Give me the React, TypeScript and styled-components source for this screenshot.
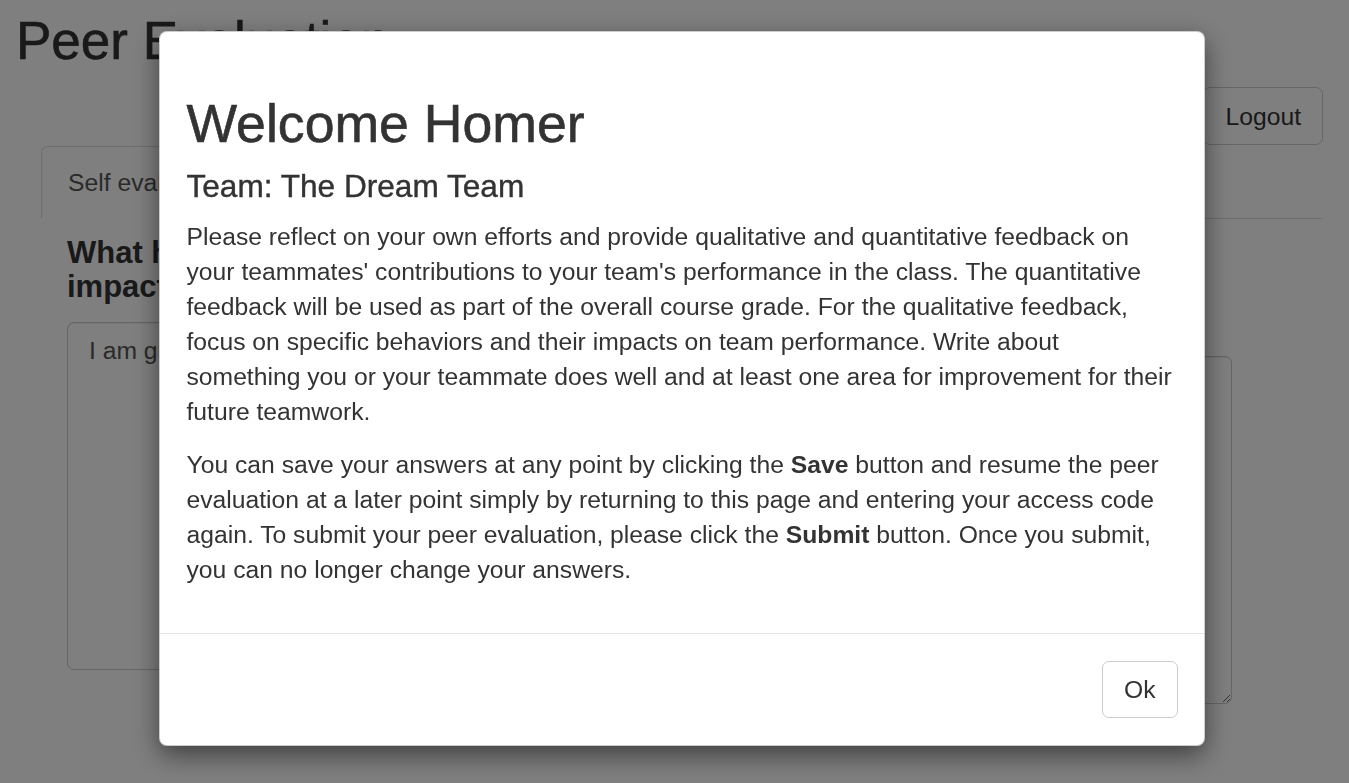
import React from 'react';
import styled, {createGlobalStyle} from 'styled-components';

const GlobalStyle = createGlobalStyle`
	* {
		box-sizing: border-box;
	}
	body {
		margin: 0;
		background: #ffffff;
		color: #333333;
		font-family: "Liberation Sans", Arial, sans-serif;
		font-size: 24.7px;
		line-height: 35px;
	}
`;

const Page = styled.div`
	padding: 12px 26px 0 16px;
`;

const Title = styled.h2`
	margin: 0;
	font-size: 53px;
	font-weight: 500;
	line-height: 1.1;
	-webkit-text-stroke: 0.6px #333333;
`;

const Toolbar = styled.div`
	display: flex;
	justify-content: flex-end;
	margin: 17px 0 1px;
`;

const Button = styled.button`
	padding: 10.3px 21px;
	border: 1px solid #cccccc;
	border-radius: 7px;
	background: #ffffff;
	color: #333333;
	font: inherit;
	line-height: 35px;
`;

const Content = styled.div`
	margin-left: 25px;
`;

const Tabs = styled.ul`
	display: flex;
	margin: 0;
	padding: 0;
	list-style: none;
	border-bottom: 1px solid #dddddd;
`;

const Tab = styled.li<{ active?: boolean }>`
	margin: 0 4px -1px 0;
	padding: 18px 26px;
	border: 1px solid ${p => (p.active ? '#dddddd' : 'transparent')};
	border-bottom-color: transparent;
	border-radius: 7px 7px 0 0;
	background: #ffffff;
	color: ${p => (p.active ? '#555555' : '#337ab7')};
`;

const Pane = styled.div`
	display: grid;
	grid-template-columns: 556px 556px;
	column-gap: 53px;
	padding: 0 26px;
`;

const Question = styled.h4`
	margin: 17.5px 0;
	font-size: 31px;
	font-weight: bold;
	line-height: 1.1;
`;

const Answer = styled.textarea`
	display: block;
	width: 100%;
	height: 348px;
	padding: 10px 21px;
	border: 1px solid #cccccc;
	border-radius: 7px;
	box-shadow: inset 0 1px 1px rgba(0, 0, 0, 0.075);
	color: #555555;
	font: inherit;
	line-height: 35px;
	resize: vertical;
`;

const Backdrop = styled.div`
	position: fixed;
	inset: 0;
	display: flex;
	align-items: flex-start;
	padding: 31px 0 0 159px;
	background: rgba(0, 0, 0, 0.5);
`;

const Dialog = styled.div`
	width: 1046px;
	border: 1px solid rgba(0, 0, 0, 0.2);
	border-radius: 8px;
	background: #ffffff;
	box-shadow: 0 9px 26px rgba(0, 0, 0, 0.5);
	overflow: hidden;
`;

const Body = styled.div`
	padding: 26.5px 26.5px 28.4px;
	> p {
		margin: 0 0 17.65px;
	}
`;

const Heading = styled.h2`
	margin: 35.4px 0 15.7px;
	font-size: 53.6px;
	font-weight: 500;
	line-height: 1.1;
	-webkit-text-stroke: 0.6px #333333;
`;

const Team = styled.h4`
	margin: 0 0 16.1px;
	font-size: 31.6px;
	font-weight: 500;
	line-height: 1.1;
	-webkit-text-stroke: 0.4px #333333;
`;

const Footer = styled.div`
	display: flex;
	justify-content: flex-end;
	padding: 26.5px;
	border-top: 1px solid #e5e5e5;
`;

const App = () => {
	return (
		<>
			<GlobalStyle/>
			<Page>
				<Title>Peer Evaluation</Title>
				<Toolbar>
					<Button>Logout</Button>
				</Toolbar>
				<Content>
					<Tabs>
						<Tab active>Self evaluation</Tab>
						<Tab>Bart Simpson</Tab>
						<Tab>Lisa Simpson</Tab>
					</Tabs>
					<Pane>
						<div>
							<Question>What have you contributed and what<br/>impact did it have on the team?</Question>
							<Answer defaultValue="I am glad with my work this term."/>
						</div>
						<div>
							<Question>How well did you<br/>communicate with your<br/>teammates?</Question>
							<Answer defaultValue=""/>
						</div>
					</Pane>
				</Content>
			</Page>
			<Backdrop>
				<Dialog>
					<Body>
						<Heading>Welcome Homer</Heading>
						<Team>Team: The Dream Team</Team>
						<p>
							Please reflect on your own efforts and provide qualitative and quantitative feedback on
							your teammates' contributions to your team's performance in the class. The quantitative
							feedback will be used as part of the overall course grade. For the qualitative feedback,
							focus on specific behaviors and their impacts on team performance. Write about
							something you or your teammate does well and at least one area for improvement for their
							future teamwork.
						</p>
						<p>
							You can save your answers at any point by clicking the <b>Save</b> button and resume the peer
							evaluation at a later point simply by returning to this page and entering your access code
							again. To submit your peer evaluation, please click the <b>Submit</b> button. Once you submit,
							you can no longer change your answers.
						</p>
					</Body>
					<Footer>
						<Button>Ok</Button>
					</Footer>
				</Dialog>
			</Backdrop>
		</>
	);
};

export default App;
